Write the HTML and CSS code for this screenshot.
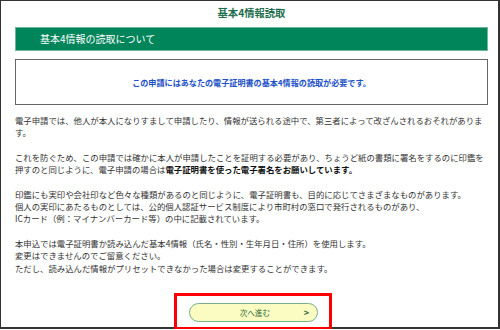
FILE: index.html
```html
<!DOCTYPE html>
<html lang="ja">
<head>
  <meta charset="UTF-8" />
  <meta name="viewport" content="width=device-width, initial-scale=1.0" />
  <title>基本4情報読取</title>
  <link rel="stylesheet" href="styles.css">
</head>
<body>
  <div class="frame">
    <div class="title">基本4情報読取</div>
    <div class="section-bar">基本4情報の読取について</div>
    <div class="notice">この申請にはあなたの電子証明書の基本4情報の読取が必要です。</div>

    <div class="body-text">
      <p>電子申請では、他人が本人になりすまして申請したり、情報が送られる途中で、第三者によって改ざんされるおそれがありま<br>す。</p>
      <p>これを防ぐため、この申請では確かに本人が申請したことを証明する必要があり、ちょうど紙の書類に署名をするのに印鑑を<br>押すのと同じように、電子申請の場合は<strong>電子証明書を使った電子署名をお願いしています。</strong></p>
      <p>印鑑にも実印や会社印など色々な種類があるのと同じように、電子証明書も、目的に応じてさまざまなものがあります。<br>個人の実印にあたるものとしては、公的個人認証サービス制度により市町村の窓口で発行されるものがあり、<br>ICカード（例：マイナンバーカード等）の中に記載されています。</p>
      <p>本申込では電子証明書か読み込んだ基本4情報（氏名・性別・生年月日・住所）を使用します。<br>変更はできませんのでご留意ください。<br>ただし、読み込んだ情報がプリセットできなかった場合は変更することができます。</p>
    </div>

    <div class="btn-row">
      <div class="highlight">
        <button class="btn-next"><span class="btn-label">次へ進む</span><span class="btn-arrow">&gt;</span></button>
      </div>
    </div>
  </div>
</body>
</html>
```

FILE: styles.css
```css
body {
  margin: 0;
  padding: 0;
  background: #fff;
  font-family: "Noto Sans CJK JP", "Noto Sans", sans-serif;
  color: #333;
}
.frame {
  box-sizing: border-box;
  width: 500px;
  height: 329px;
  border: 1px solid #333;
  border-right-width: 2px;
  border-bottom-width: 2px;
  box-shadow: 0 1px 0 #ccc;
  padding: 0 10px 0 14px;
}
.title {
  height: 24px;
  line-height: 24px;
  text-align: center;
  font-size: 10.3px;
  font-weight: bold;
  color: #1e6e4e;
}
.section-bar {
  box-sizing: border-box;
  margin-top: 2px;
  height: 24px;
  line-height: 22px;
  padding-left: 24px;
  background: #00855a;
  border: 1px solid #6fb897;
  color: #fff;
  font-size: 10px;
}
.notice {
  box-sizing: border-box;
  margin-top: 8px;
  height: 46px;
  border: 1px solid #666;
  display: flex;
  align-items: center;
  justify-content: center;
  font-size: 8.1px;
  font-weight: bold;
  color: #2050c8;
}
.body-text {
  margin-top: 9px;
  font-size: 8.4px;
  line-height: 12.3px;
  white-space: nowrap;
}
.body-text p {
  margin: 0 0 12.3px;
}
.body-text p:last-child { margin-bottom: 0; }
.body-text strong {
  color: #111;
  font-weight: bold;
}
.btn-row {
  margin-top: 19px;
  display: flex;
  justify-content: center;
  padding-left: 3px;
}
.highlight {
  box-sizing: border-box;
  width: 158px;
  height: 37px;
  border: 3px solid #f00;
  padding: 7px 11px 0 12px;
  background: #fff;
}
.btn-next {
  box-sizing: border-box;
  width: 129px;
  height: 19px;
  border: 1px solid #78b08a;
  border-radius: 10px;
  background: #fbfcc2;
  color: #2f6a3c;
  font-family: inherit;
  font-size: 7.6px;
  padding: 0 8px;
  display: flex;
  align-items: center;
  position: relative;
}
.btn-label {
  flex: 1;
  text-align: center;
  padding-left: 8px;
}
.btn-arrow {
  font-size: 9px;
  font-weight: bold;
}
```
